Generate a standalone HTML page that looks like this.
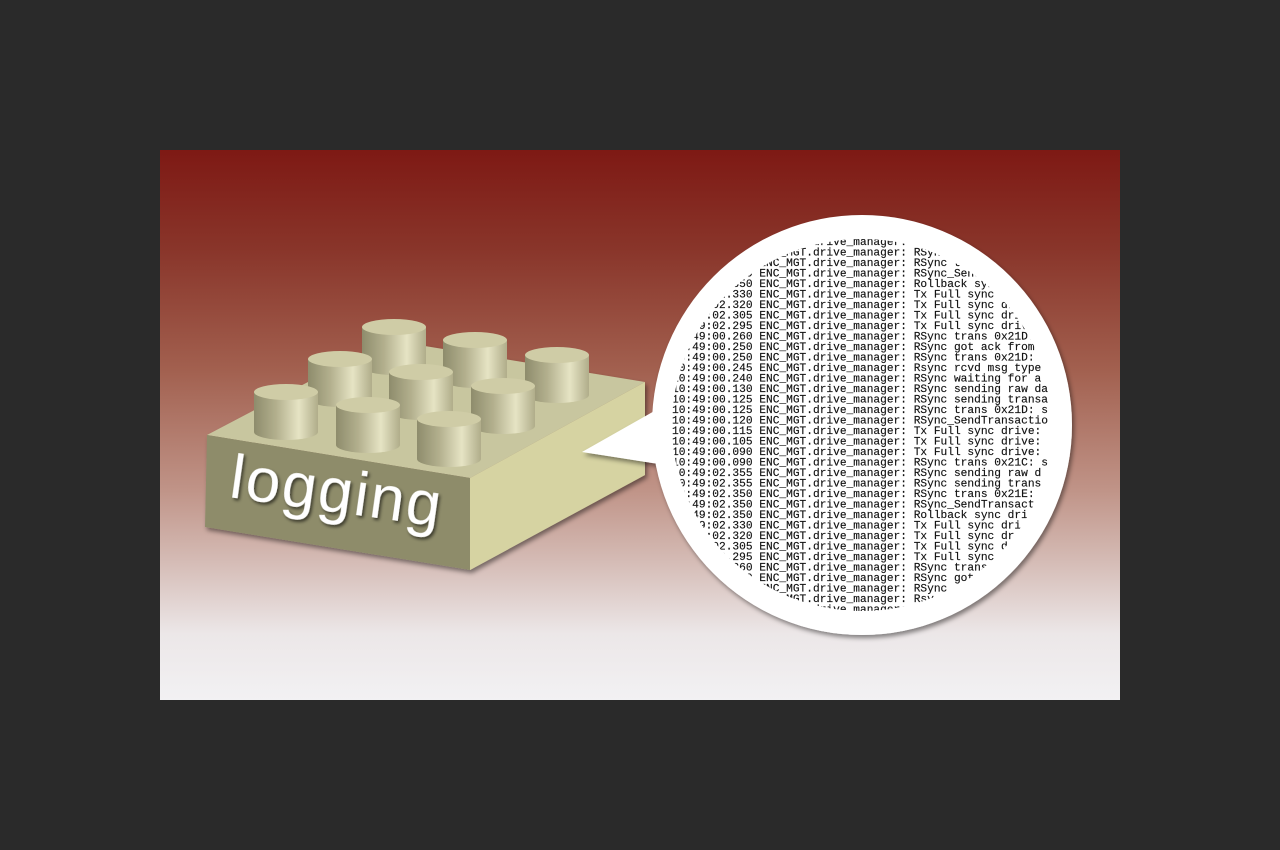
<!DOCTYPE html>
<html><head><meta charset="utf-8"><style>
html,body{margin:0;padding:0;background:#2a2a2a;width:1280px;height:850px;overflow:hidden}
svg{display:block}
</style></head><body>
<svg width="1280" height="850" viewBox="0 0 1280 850" xmlns="http://www.w3.org/2000/svg">
<defs>
<linearGradient id="bg" x1="0" y1="0" x2="0" y2="1">
<stop offset="0" stop-color="#7e1914"/>
<stop offset="0.18" stop-color="#89352a"/>
<stop offset="0.4" stop-color="#a2604f"/>
<stop offset="0.62" stop-color="#c09488"/>
<stop offset="0.75" stop-color="#d5bcb6"/>
<stop offset="0.88" stop-color="#ece7e8"/>
<stop offset="1" stop-color="#f2f1f3"/>
</linearGradient>
<linearGradient id="cyl" x1="0" y1="0" x2="1" y2="0">
<stop offset="0" stop-color="#8e8c6c"/>
<stop offset="0.35" stop-color="#b3b08e"/>
<stop offset="0.7" stop-color="#e6e4c4"/>
<stop offset="1" stop-color="#b0ad8a"/>
</linearGradient>
<clipPath id="cc"><ellipse cx="862" cy="425" rx="190" ry="186"/></clipPath>
<filter id="sh" x="-20%" y="-20%" width="140%" height="140%"><feDropShadow dx="2" dy="3" stdDeviation="2.5" flood-color="#000" flood-opacity="0.45"/></filter>
<filter id="tsh"><feDropShadow dx="2" dy="2" stdDeviation="1.5" flood-color="#000" flood-opacity="0.6"/></filter>
</defs>
<rect x="160" y="150" width="960" height="550" fill="url(#bg)"/>

<g filter="url(#sh)">
<polygon points="207,435 388,340 645,382 470,478" fill="#c8c69f"/>
<polygon points="207,435 470,478 470,570 205,527" fill="#8e8c6a"/>
<polygon points="470,478 645,382 645,475 470,570" fill="#d6d3a2"/>
</g>
<g>
<rect x="362" y="327" width="64" height="40" fill="url(#cyl)"/><ellipse cx="394" cy="367" rx="32" ry="8" fill="url(#cyl)"/><ellipse cx="394" cy="327" rx="32" ry="8" fill="#cfcca6"/>
<rect x="443" y="340" width="64" height="40" fill="url(#cyl)"/><ellipse cx="475" cy="380" rx="32" ry="8" fill="url(#cyl)"/><ellipse cx="475" cy="340" rx="32" ry="8" fill="#cfcca6"/>
<rect x="308" y="359" width="64" height="40" fill="url(#cyl)"/><ellipse cx="340" cy="399" rx="32" ry="8" fill="url(#cyl)"/><ellipse cx="340" cy="359" rx="32" ry="8" fill="#cfcca6"/>
<rect x="525" y="355" width="64" height="40" fill="url(#cyl)"/><ellipse cx="557" cy="395" rx="32" ry="8" fill="url(#cyl)"/><ellipse cx="557" cy="355" rx="32" ry="8" fill="#cfcca6"/>
<rect x="389" y="372" width="64" height="40" fill="url(#cyl)"/><ellipse cx="421" cy="412" rx="32" ry="8" fill="url(#cyl)"/><ellipse cx="421" cy="372" rx="32" ry="8" fill="#cfcca6"/>
<rect x="254" y="392" width="64" height="40" fill="url(#cyl)"/><ellipse cx="286" cy="432" rx="32" ry="8" fill="url(#cyl)"/><ellipse cx="286" cy="392" rx="32" ry="8" fill="#cfcca6"/>
<rect x="471" y="386" width="64" height="40" fill="url(#cyl)"/><ellipse cx="503" cy="426" rx="32" ry="8" fill="url(#cyl)"/><ellipse cx="503" cy="386" rx="32" ry="8" fill="#cfcca6"/>
<rect x="336" y="405" width="64" height="40" fill="url(#cyl)"/><ellipse cx="368" cy="445" rx="32" ry="8" fill="url(#cyl)"/><ellipse cx="368" cy="405" rx="32" ry="8" fill="#cfcca6"/>
<rect x="417" y="419" width="64" height="40" fill="url(#cyl)"/><ellipse cx="449" cy="459" rx="32" ry="8" fill="url(#cyl)"/><ellipse cx="449" cy="419" rx="32" ry="8" fill="#cfcca6"/>
</g>
<text x="228" y="497" transform="rotate(8 228 497)" font-family="Liberation Sans, sans-serif" font-size="62" fill="#fff" filter="url(#tsh)" letter-spacing="2">logging</text>

<g filter="url(#sh)">
<circle cx="862" cy="425" r="210" fill="#fff"/>
<polygon points="665,405 582,452 665,465" fill="#fff"/>
</g>
<g clip-path="url(#cc)" font-family="Liberation Mono, monospace" font-size="11.2" fill="#111" stroke="#111" stroke-width="0.15" xml:space="preserve">
<text x="672" y="245">10:49:02.360 ENC_MGT.drive_manager: RSync trans 0x21F: state</text>
<text x="672" y="255.5">10:49:02.360 ENC_MGT.drive_manager: RSync got ack from drive</text>
<text x="672" y="266">10:49:02.355 ENC_MGT.drive_manager: RSync trans 0x21F: s</text>
<text x="672" y="276.5">10:49:02.350 ENC_MGT.drive_manager: RSync_SendTransaction</text>
<text x="672" y="287">10:49:02.350 ENC_MGT.drive_manager: Rollback sync drive</text>
<text x="672" y="297.5">10:49:02.330 ENC_MGT.drive_manager: Tx Full sync drive:</text>
<text x="672" y="308">10:49:02.320 ENC_MGT.drive_manager: Tx Full sync drive:</text>
<text x="672" y="318.5">10:49:02.305 ENC_MGT.drive_manager: Tx Full sync drive:</text>
<text x="672" y="329">10:49:02.295 ENC_MGT.drive_manager: Tx Full sync drive:</text>
<text x="672" y="339.5">10:49:00.260 ENC_MGT.drive_manager: RSync trans 0x21D: s</text>
<text x="672" y="350">10:49:00.250 ENC_MGT.drive_manager: RSync got ack from</text>
<text x="672" y="360.5">10:49:00.250 ENC_MGT.drive_manager: RSync trans 0x21D: s</text>
<text x="672" y="371">10:49:00.245 ENC_MGT.drive_manager: Rsync rcvd msg type</text>
<text x="672" y="381.5">10:49:00.240 ENC_MGT.drive_manager: RSync waiting for a</text>
<text x="672" y="392">10:49:00.130 ENC_MGT.drive_manager: RSync sending raw da</text>
<text x="672" y="402.5">10:49:00.125 ENC_MGT.drive_manager: RSync sending transa</text>
<text x="672" y="413">10:49:00.125 ENC_MGT.drive_manager: RSync trans 0x21D: s</text>
<text x="672" y="423.5">10:49:00.120 ENC_MGT.drive_manager: RSync_SendTransactio</text>
<text x="672" y="434">10:49:00.115 ENC_MGT.drive_manager: Tx Full sync drive:</text>
<text x="672" y="444.5">10:49:00.105 ENC_MGT.drive_manager: Tx Full sync drive:</text>
<text x="672" y="455">10:49:00.090 ENC_MGT.drive_manager: Tx Full sync drive:</text>
<text x="672" y="465.5">10:49:00.090 ENC_MGT.drive_manager: RSync trans 0x21C: s</text>
<text x="672" y="476">10:49:02.355 ENC_MGT.drive_manager: RSync sending raw d</text>
<text x="672" y="486.5">10:49:02.355 ENC_MGT.drive_manager: RSync sending trans</text>
<text x="672" y="497">10:49:02.350 ENC_MGT.drive_manager: RSync trans 0x21E:</text>
<text x="672" y="507.5">10:49:02.350 ENC_MGT.drive_manager: RSync_SendTransact</text>
<text x="672" y="518">10:49:02.350 ENC_MGT.drive_manager: Rollback sync dri</text>
<text x="672" y="528.5">10:49:02.330 ENC_MGT.drive_manager: Tx Full sync dri</text>
<text x="672" y="539">10:49:02.320 ENC_MGT.drive_manager: Tx Full sync dr</text>
<text x="672" y="549.5">10:49:02.305 ENC_MGT.drive_manager: Tx Full sync d</text>
<text x="672" y="560">10:49:02.295 ENC_MGT.drive_manager: Tx Full sync</text>
<text x="672" y="570.5">10:49:00.260 ENC_MGT.drive_manager: RSync trans</text>
<text x="672" y="581">10:49:00.250 ENC_MGT.drive_manager: RSync got</text>
<text x="672" y="591.5">10:49:00.250 ENC_MGT.drive_manager: RSync</text>
<text x="672" y="602">10:49:00.245 ENC_MGT.drive_manager: Rsy</text>
<text x="672" y="612.5">10:49:00.240 ENC_MGT.drive_manager:</text>
</g>
</svg>
</body></html>
